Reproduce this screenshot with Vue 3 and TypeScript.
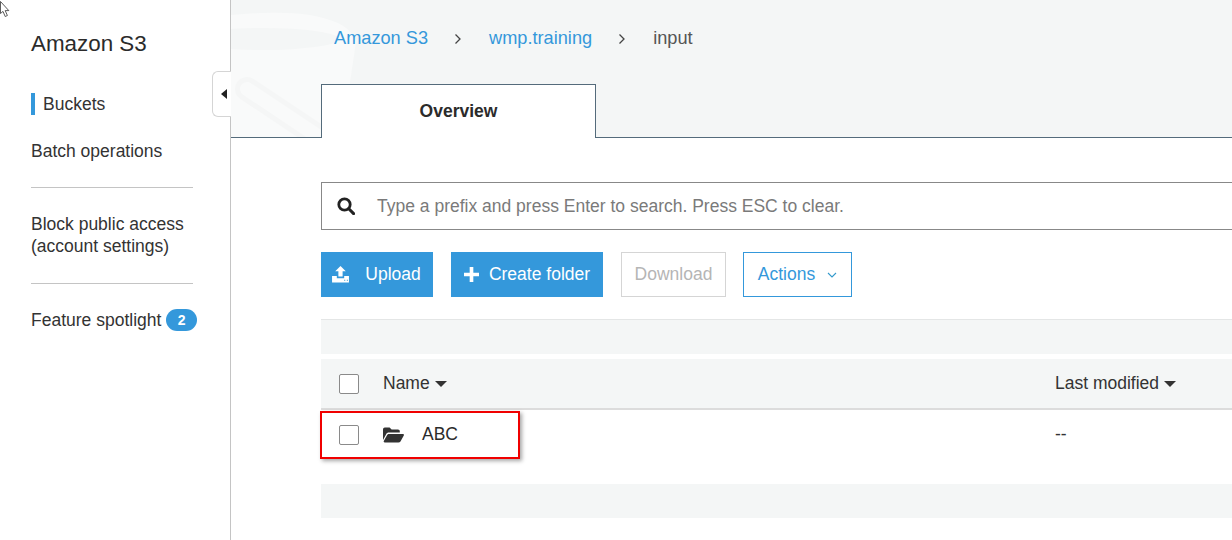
<template>
  <div class="page">
    <aside class="sidebar">
      <svg class="cursor" viewBox="0 0 10 18" width="10" height="18">
        <path d="M0.5 0.5V12.5L3 10.4L5.2 15.5L7.4 14.5L5.2 9.6H8.8Z" fill="#fff" stroke="#333" stroke-width="0.8" />
      </svg>
      <h1 class="brand">Amazon S3</h1>
      <a class="nav-item active">Buckets</a>
      <a class="nav-item batch">Batch operations</a>
      <hr class="divider first" />
      <a class="nav-item block">Block public access<br />(account settings)</a>
      <hr class="divider second" />
      <a class="nav-item spotlight">Feature spotlight <span class="badge">2</span></a>
      <button class="collapse" type="button">
        <svg viewBox="0 0 6 10" width="6" height="10"><path d="M6 0V10L0 5Z" fill="#222" /></svg>
      </button>
    </aside>

    <main class="main">
      <header class="top">
        <svg class="bucket" viewBox="0 0 170 137" width="170" height="137">
          <path d="M0 15C50 11 80 12 107 23C117 28 123 35 125 42L119 82L112 137H0Z" fill="#f9fafa" />
          <ellipse cx="32" cy="39" rx="76" ry="11" fill="#f4f6f6" />
          <path d="M16 89L112 153" stroke="#f5f6f6" stroke-width="24" fill="none" stroke-linecap="round" />
          <path d="M16 89L112 153" stroke="#f9fafa" stroke-width="14" fill="none" stroke-linecap="round" />
        </svg>
        <nav class="crumbs">
          <a>Amazon S3</a>
          <svg class="sep" viewBox="0 0 8 12" width="8" height="12"><path d="M1.5 1.5L6 6L1.5 10.5" fill="none" stroke="#444" stroke-width="1.3" /></svg>
          <a>wmp.training</a>
          <svg class="sep" viewBox="0 0 8 12" width="8" height="12"><path d="M1.5 1.5L6 6L1.5 10.5" fill="none" stroke="#444" stroke-width="1.3" /></svg>
          <span>input</span>
        </nav>
        <div class="tab">Overview</div>
      </header>

      <section class="content">
        <div class="search">
          <svg viewBox="0 0 18 18" width="18" height="18">
            <circle cx="7.5" cy="7.5" r="5.7" fill="none" stroke="#222" stroke-width="2.8" />
            <path d="M11.8 11.8L16.6 16.6" stroke="#222" stroke-width="3" stroke-linecap="round" />
          </svg>
          <span>Type a prefix and press Enter to search. Press ESC to clear.</span>
        </div>

        <div class="actions">
          <button class="btn primary upload" type="button">
            <svg viewBox="0 0 18 18" width="19" height="19">
              <path d="M9 1L14 6H11V11H7V6H4Z" fill="#fff" />
              <path d="M1 10.5H5.5V12.5H12.5V10.5H17V16.5H1Z" fill="#fff" />
              <path d="M12.5 14.5H13.5M15 14.5H16" stroke="#39c" stroke-width="1" />
            </svg>
            Upload
          </button>
          <button class="btn primary create" type="button">
            <svg viewBox="0 0 14 14" width="15" height="15"><path d="M7 0V14M0 7H14" stroke="#fff" stroke-width="3.4" /></svg>
            Create folder
          </button>
          <button class="btn disabled" type="button">Download</button>
          <button class="btn outline" type="button">
            Actions
            <svg viewBox="0 0 10 6" width="10" height="6"><path d="M1 1L5 5L9 1" fill="none" stroke="#39c" stroke-width="1.1" /></svg>
          </button>
        </div>

        <div class="strip"></div>

        <div class="row head">
          <span class="check"></span>
          <span class="name">Name <i class="caret"></i></span>
          <span class="modified">Last modified <i class="caret"></i></span>
        </div>
        <div class="row body">
          <span class="check"></span>
          <svg class="folder" viewBox="0 0 21 16" width="21" height="16">
            <path d="M0 2.5C0 1.4 .8 .6 1.8 .6H6.6L8.6 2.6H15C16 2.6 16.8 3.4 16.8 4.4V5.6H6C4.6 5.6 3.6 6.2 3 7.4L0 13Z" fill="#333" />
            <path d="M6 7H20C20.8 7 21.2 7.7 20.8 8.4L17.6 14.2C17.2 15 16.4 15.4 15.6 15.4H1.6C.8 15.4 .4 14.7 .8 14L4 8.2C4.4 7.4 5.2 7 6 7Z" fill="#333" />
          </svg>
          <span class="file">ABC</span>
          <span class="modified">--</span>
          <div class="highlight"></div>
        </div>
        <div class="strip bottom"></div>
      </section>
    </main>
  </div>
</template>

<script setup lang="ts">
</script>

<style>
html,
body {
  margin: 0;
  overflow: hidden;
  background: #fff;
}
</style>

<style scoped>
.page {
  display: flex;
  width: 1232px;
  height: 540px;
  overflow: hidden;
  font-family: "Liberation Sans", Arial, sans-serif;
  font-size: 17.5px;
  color: #333;
}

.sidebar {
  position: relative;
  flex: 0 0 231px;
  box-sizing: border-box;
  padding: 30px 0 0 31px;
  border-right: 1px solid #c4c4c4;
}

.cursor {
  position: absolute;
  top: 1px;
  left: 0;
}

.brand {
  margin: 0 0 35px;
  font-size: 22.4px;
  font-weight: 400;
  line-height: 28px;
  color: #2b2b2b;
}

.nav-item {
  display: block;
  line-height: 22px;
  color: #333;
}

.active {
  border-left: 4px solid #3498db;
  padding-left: 8px;
}

.batch {
  margin-top: 25px;
}

.divider {
  width: 162px;
  height: 1px;
  margin: 0;
  border: 0;
  background: #c4c4c4;
}

.divider.first {
  margin-top: 25px;
}

.block {
  margin-top: 25px;
}

.divider.second {
  margin-top: 26px;
}

.spotlight {
  margin-top: 25px;
}

.badge {
  display: inline-block;
  width: 31px;
  height: 22px;
  border-radius: 11px;
  background: #3498db;
  color: #fff;
  font-size: 14px;
  font-weight: 700;
  line-height: 22px;
  text-align: center;
  vertical-align: top;
}

.collapse {
  position: absolute;
  top: 71px;
  right: -1px;
  display: flex;
  align-items: center;
  justify-content: center;
  box-sizing: border-box;
  width: 19px;
  height: 46px;
  padding: 0 0 0 3px;
  border: 1px solid #d5d5d5;
  border-right: 0;
  border-radius: 6px 0 0 6px;
  background: #fff;
}

.main {
  flex: 1;
  min-width: 0;
}

.top {
  position: relative;
  box-sizing: border-box;
  height: 138px;
  padding: 27px 0 0 90px;
  border-bottom: 1px solid #546b7b;
  background: #f4f6f6;
}

.bucket {
  position: absolute;
  top: 0;
  left: 0;
}

.crumbs {
  position: relative;
  display: flex;
  align-items: center;
  height: 23px;
  padding-left: 13px;
  font-size: 18.2px;
  color: #555;
}

.crumbs a {
  color: #3498db;
}

.sep {
  margin: 0 27px 0 26px;
}

.tab {
  position: relative;
  box-sizing: border-box;
  width: 275px;
  height: 54px;
  margin-top: 34px;
  border: 1px solid #546b7b;
  border-bottom: 0;
  background: #fff;
  color: #2b2b2b;
  font-weight: 700;
  line-height: 52px;
  text-align: center;
}

.content {
  padding: 44px 0 0 90px;
}

.search {
  display: flex;
  align-items: center;
  box-sizing: border-box;
  width: 1000px;
  height: 48px;
  padding-left: 15px;
  border: 1px solid #888;
  color: #7a7a7a;
}

.search svg {
  margin-right: 22px;
}

.actions {
  display: flex;
  gap: 18px;
  margin-top: 22px;
}

.btn {
  display: flex;
  align-items: center;
  justify-content: center;
  box-sizing: border-box;
  height: 45px;
  padding: 0;
  border: 0;
  font-family: inherit;
  font-size: 17.5px;
}

.primary {
  background: #3498db;
  color: #fff;
}

.upload {
  width: 112px;
  gap: 15px;
  padding-right: 2px;
}

.create {
  width: 152px;
  gap: 10px;
}

.disabled {
  width: 105px;
  border: 1px solid #d5d5d5;
  background: #fff;
  color: #b5b5b5;
}

.outline {
  width: 109px;
  margin-left: -1px;
  gap: 12px;
  border: 1px solid #3498db;
  background: #fff;
  color: #3498db;
}

.strip {
  box-sizing: border-box;
  height: 35px;
  margin-top: 22px;
  border-top: 1px solid #e4e6e6;
  background: #f4f6f6;
}

.row {
  position: relative;
  display: flex;
  align-items: center;
  padding-left: 18px;
}

.head {
  height: 49px;
  margin-top: 5px;
  border-bottom: 2px solid #dcdcdc;
  background: #f4f6f6;
}

.body {
  height: 49px;
}

.check {
  flex: none;
  box-sizing: border-box;
  width: 20px;
  height: 20px;
  border: 1px solid #8a8a8a;
  border-radius: 2px;
  background: #fff;
}

.name {
  margin-left: 24px;
}

.caret {
  display: inline-block;
  margin-left: 0;
  border: 6px solid transparent;
  border-top: 6px solid #333;
  border-bottom: 0;
  vertical-align: 2px;
}

.modified {
  position: absolute;
  left: 734px;
}

.folder {
  margin-left: 24px;
}

.file {
  margin-left: 18px;
  color: #2b2b2b;
}

.highlight {
  position: absolute;
  top: 1px;
  left: -1px;
  box-sizing: border-box;
  width: 200px;
  height: 48px;
  border: 2px solid #f00000;
  box-shadow: 2px 2px 4px rgba(0, 0, 0, 0.35);
}

.strip.bottom {
  height: 34px;
  margin-top: 25px;
  border-top: 0;
}
</style>
